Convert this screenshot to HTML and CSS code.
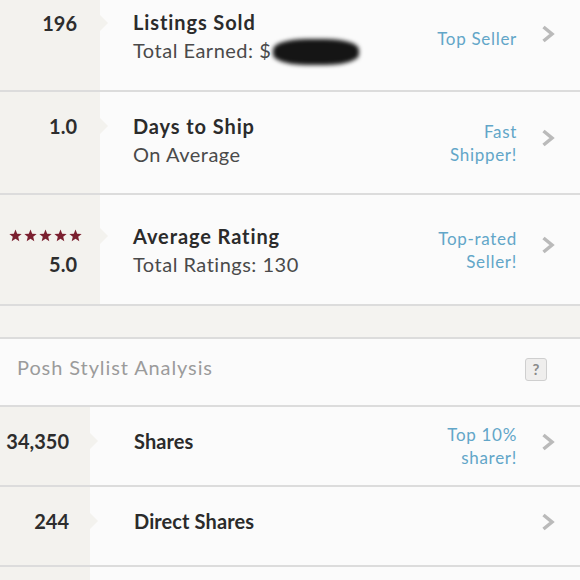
FILE: index.html
```html
<!DOCTYPE html>
<html lang="en">
<head>
    <meta charset="UTF-8">
    <meta name="viewport" content="width=device-width, initial-scale=1.0">
    <title>Closet Stats</title>
    <link rel="stylesheet" href="styles.css">
</head>
<body>
    <div class="stats">
        <div class="row row-sold">
            <div class="num"><span class="lead">196</span><span class="blank"></span></div>
            <div class="info">
                <div class="title">Listings Sold</div>
                <div class="sub">Total Earned: $<span class="redact"></span></div>
            </div>
            <div class="tag">Top Seller</div>
            <svg class="chev" width="14" height="18" viewBox="0 0 14 18"><polyline points="2.5,2 11,9 2.5,16" /></svg>
        </div>

        <div class="row row-ship">
            <div class="num"><span class="lead">1.0</span><span class="blank"></span></div>
            <div class="info">
                <div class="title">Days to Ship</div>
                <div class="sub">On Average</div>
            </div>
            <div class="tag">Fast<br>Shipper!</div>
            <svg class="chev" width="14" height="18" viewBox="0 0 14 18"><polyline points="2.5,2 11,9 2.5,16" /></svg>
        </div>

        <div class="row row-rating">
            <div class="num">
                <span class="lead stars">
                    <svg width="13" height="13" viewBox="0 0 24 24"><polygon points="12,1 15.1,8.6 23.4,9.2 17,14.5 19,22.6 12,18.2 5,22.6 7,14.5 0.6,9.2 8.9,8.6" /></svg>
                    <svg width="13" height="13" viewBox="0 0 24 24"><polygon points="12,1 15.1,8.6 23.4,9.2 17,14.5 19,22.6 12,18.2 5,22.6 7,14.5 0.6,9.2 8.9,8.6" /></svg>
                    <svg width="13" height="13" viewBox="0 0 24 24"><polygon points="12,1 15.1,8.6 23.4,9.2 17,14.5 19,22.6 12,18.2 5,22.6 7,14.5 0.6,9.2 8.9,8.6" /></svg>
                    <svg width="13" height="13" viewBox="0 0 24 24"><polygon points="12,1 15.1,8.6 23.4,9.2 17,14.5 19,22.6 12,18.2 5,22.6 7,14.5 0.6,9.2 8.9,8.6" /></svg>
                    <svg width="13" height="13" viewBox="0 0 24 24"><polygon points="12,1 15.1,8.6 23.4,9.2 17,14.5 19,22.6 12,18.2 5,22.6 7,14.5 0.6,9.2 8.9,8.6" /></svg>
                </span>
                <span>5.0</span>
            </div>
            <div class="info">
                <div class="title">Average Rating</div>
                <div class="sub">Total Ratings: 130</div>
            </div>
            <div class="tag">Top-rated<br>Seller!</div>
            <svg class="chev" width="14" height="18" viewBox="0 0 14 18"><polyline points="2.5,2 11,9 2.5,16" /></svg>
        </div>

        <div class="spacer"></div>

        <div class="section-head">
            <span>Posh Stylist Analysis</span>
            <span class="help">?</span>
        </div>

        <div class="row row-small">
            <div class="num"><span class="lead">34,350</span></div>
            <div class="info">
                <div class="title">Shares</div>
            </div>
            <div class="tag">Top 10%<br>sharer!</div>
            <svg class="chev" width="14" height="18" viewBox="0 0 14 18"><polyline points="2.5,2 11,9 2.5,16" /></svg>
        </div>

        <div class="row row-small">
            <div class="num"><span class="lead">244</span></div>
            <div class="info">
                <div class="title">Direct Shares</div>
            </div>
            <div class="tag"></div>
            <svg class="chev" width="14" height="18" viewBox="0 0 14 18"><polyline points="2.5,2 11,9 2.5,16" /></svg>
        </div>

        <div class="row row-small">
            <div class="num"></div>
            <div class="info"></div>
        </div>
    </div>
</body>
</html>
```

FILE: styles.css
```css
body {
    margin: 0;
    background: #fbfbfb;
    font-family: Lato, "Open Sans", sans-serif;
    color: #2b2b2b;
    overflow: hidden;
}
.stats {
    margin-top: -13px;
}
.row {
    display: flex;
    align-items: center;
    border-bottom: 2px solid #dcdcdc;
}
.row-sold { min-height: 103px; }
.row-ship { min-height: 101px; }
.row-rating { min-height: 109px; }
.row-small { min-height: 78px; }

.num {
    flex: none;
    align-self: stretch;
    width: 100px;
    box-sizing: border-box;
    padding-right: 23px;
    background: #f3f2ee;
    display: flex;
    flex-direction: column;
    justify-content: center;
    align-items: flex-end;
    font-size: 20px;
    font-weight: 700;
    line-height: 28px;
    color: #2d2d2d;
}
.num .blank {
    height: 28px;
}
.num .lead {
    position: relative;
}
.num .lead::after {
    content: "";
    position: absolute;
    top: 6px;
    left: calc(100% + 23px);
    border-top: 8px solid transparent;
    border-bottom: 8px solid transparent;
    border-left: 8px solid #f3f2ee;
}
.row-sold .num {
    padding-bottom: 4px;
}
.row-sold .info {
    margin-bottom: 4px;
}
.row-ship .num {
    padding-bottom: 6px;
}
.row-ship .info {
    margin-bottom: 6px;
}
.row-small .num {
    width: 90px;
    padding-right: 21px;
    padding-bottom: 10px;
}
.row-small .info {
    padding-left: 44px;
    margin-bottom: 10px;
}
.row-small .num .lead::after {
    left: calc(100% + 21px);
}

.stars {
    display: flex;
    gap: 2px;
    margin-right: -5px;
    height: 28px;
    align-items: center;
}
.stars svg {
    fill: #7b1f2f;
}
.stars.lead::after {
    left: calc(100% + 18px);
}

.info {
    flex: 1;
    padding-left: 33px;
    line-height: 28px;
}
.title {
    font-size: 20px;
    font-weight: 700;
    letter-spacing: 0.9px;
    color: #2b2b2b;
}
.row-small .title {
    letter-spacing: 0.1px;
}
.sub {
    font-size: 20px;
    letter-spacing: 0.5px;
    color: #4a4a4a;
}
.redact {
    display: inline-block;
    width: 86px;
    height: 26px;
    margin-left: 2px;
    vertical-align: -7px;
    background: #151515;
    border-radius: 40%;
    filter: blur(2px);
}

.tag {
    text-align: right;
    font-size: 17px;
    letter-spacing: 0.7px;
    line-height: 23px;
    color: #62a6c8;
}
.chev {
    flex: none;
    margin: 0 25px 9px 24px;
}
.chev polyline {
    fill: none;
    stroke: #bababa;
    stroke-width: 3.5;
}

.spacer {
    height: 31px;
    background: #f4f3f0;
    border-bottom: 2px solid #dcdcdc;
}
.section-head {
    display: flex;
    justify-content: space-between;
    align-items: center;
    height: 68px;
    padding: 0 33px 10px 17px;
    box-sizing: border-box;
    border-bottom: 2px solid #dcdcdc;
    font-size: 20px;
    letter-spacing: 0.9px;
    color: #9b9b9b;
}
.help {
    width: 20px;
    height: 21px;
    margin-top: 4px;
    border: 1px solid #cfcfcf;
    border-radius: 3px;
    background: #efeeed;
    color: #8a8a8a;
    font-size: 15px;
    font-weight: 700;
    letter-spacing: 0;
    text-align: center;
    line-height: 21px;
}
```
